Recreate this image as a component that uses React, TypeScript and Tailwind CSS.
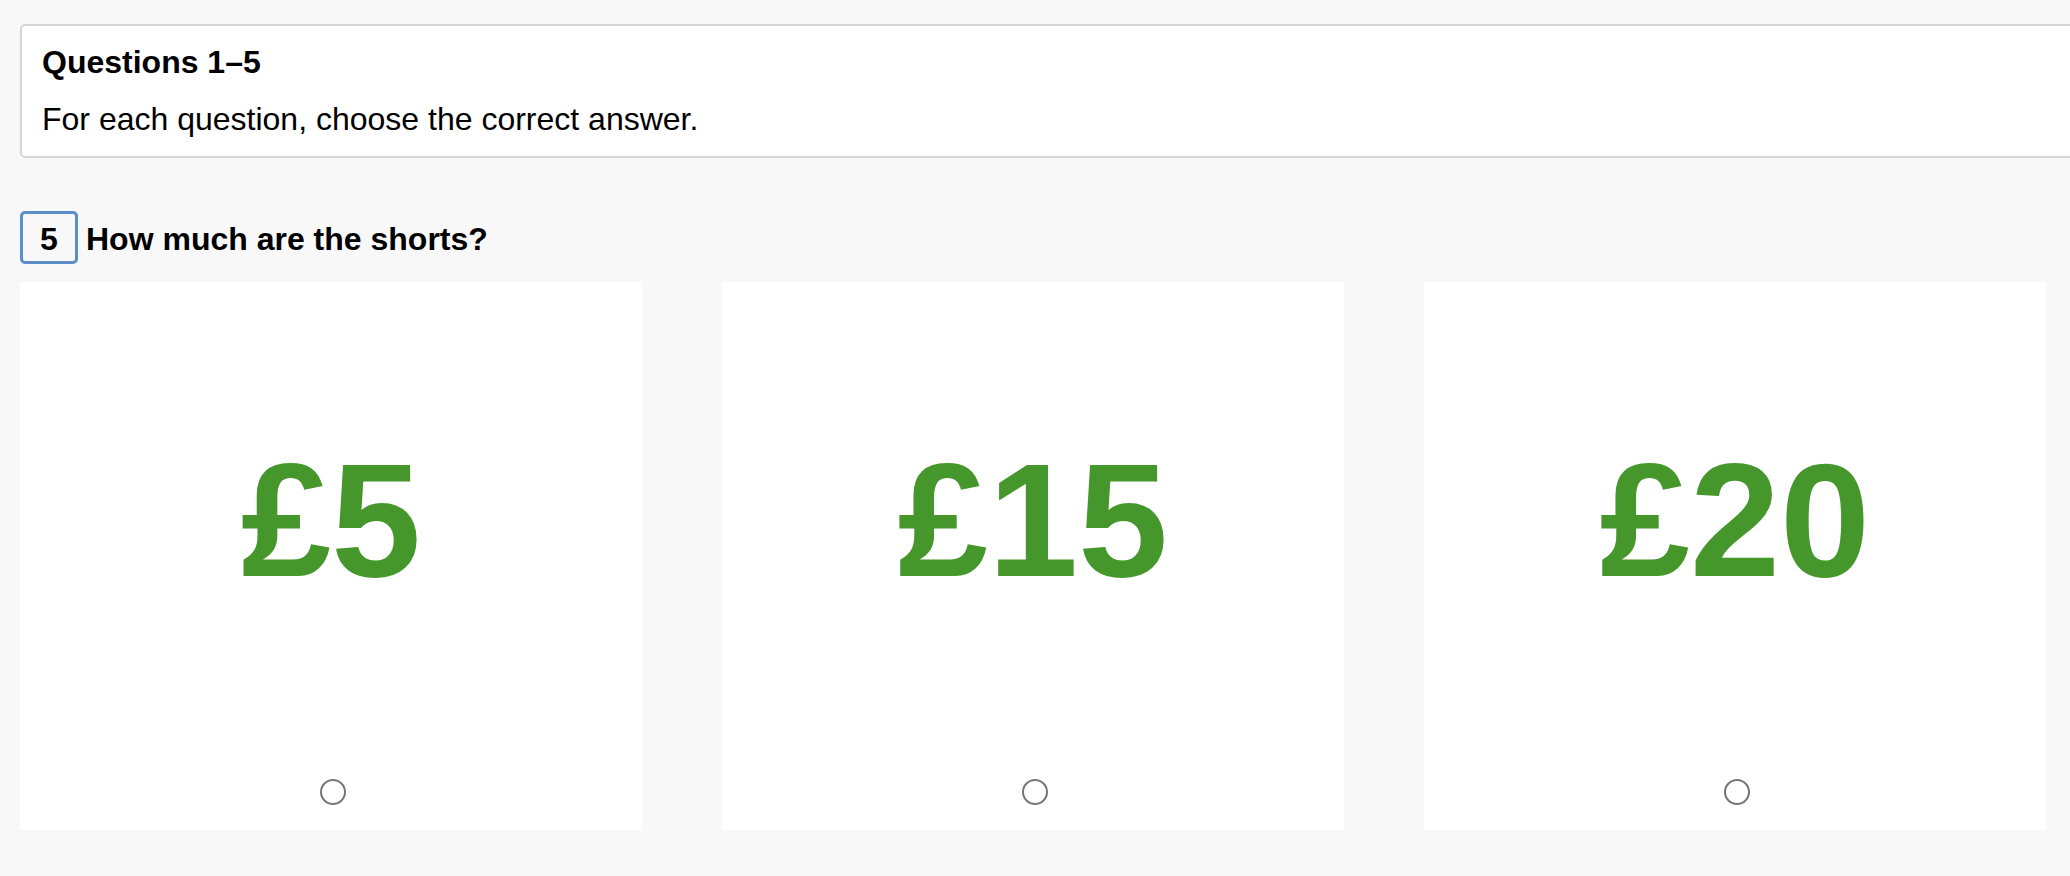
import React from 'react';

const options = ['£5', '£15', '£20'];

function PriceCard({ price }: { price: string }) {
  return (
    <div className="bg-white flex flex-col items-center">
      {/* Price "picture" */}
      <div className="h-[471px] w-full flex items-center justify-center pt-[4px]">
        <span className="text-[162px] leading-none font-bold text-[#45972c]">
          {price}
        </span>
      </div>
      <input
        type="radio"
        name="q5"
        aria-label={price}
        className="appearance-none w-[26px] h-[26px] rounded-full border-2 border-[#767676] bg-white mt-[26px] mb-[25px] ml-[4px]"
      />
    </div>
  );
}

export default function App() {
  return (
    <div
      className="min-h-screen w-full overflow-hidden bg-[#f7f8f7] text-black pt-[24px] pb-[46px]"
      style={{ fontFamily: '"Liberation Sans", Arial, Helvetica, sans-serif' }}
    >
      {/* Instructions */}
      <div className="ml-[20px] w-[2100px] bg-white border-2 border-[#d5d5d5] rounded-[5px] pl-[20px] pt-[18px] pb-[19px]">
        <h2 className="text-[32px] leading-[36px] font-bold">Questions 1–5</h2>
        <p className="text-[32px] leading-[36px] mt-[21px]">For each question, choose the correct answer.</p>
      </div>

      {/* Question */}
      <div className="mt-[53px] ml-[20px] flex items-center gap-[8px]">
        <div className="w-[58px] h-[53px] border-[3px] border-[#5b8dc9] rounded-[5px] flex items-center justify-center pt-[2px]">
          <span className="text-[32px] leading-[36px] font-bold">5</span>
        </div>
        <h3 className="text-[32px] leading-[36px] font-bold pt-[2px]">How much are the shorts?</h3>
      </div>

      {/* Options */}
      <div className="mt-[18px] pl-[20px] pr-[24px] grid grid-cols-3 gap-[80px]">
        {options.map((p) => (
          <PriceCard key={p} price={p} />
        ))}
      </div>
    </div>
  );
}
